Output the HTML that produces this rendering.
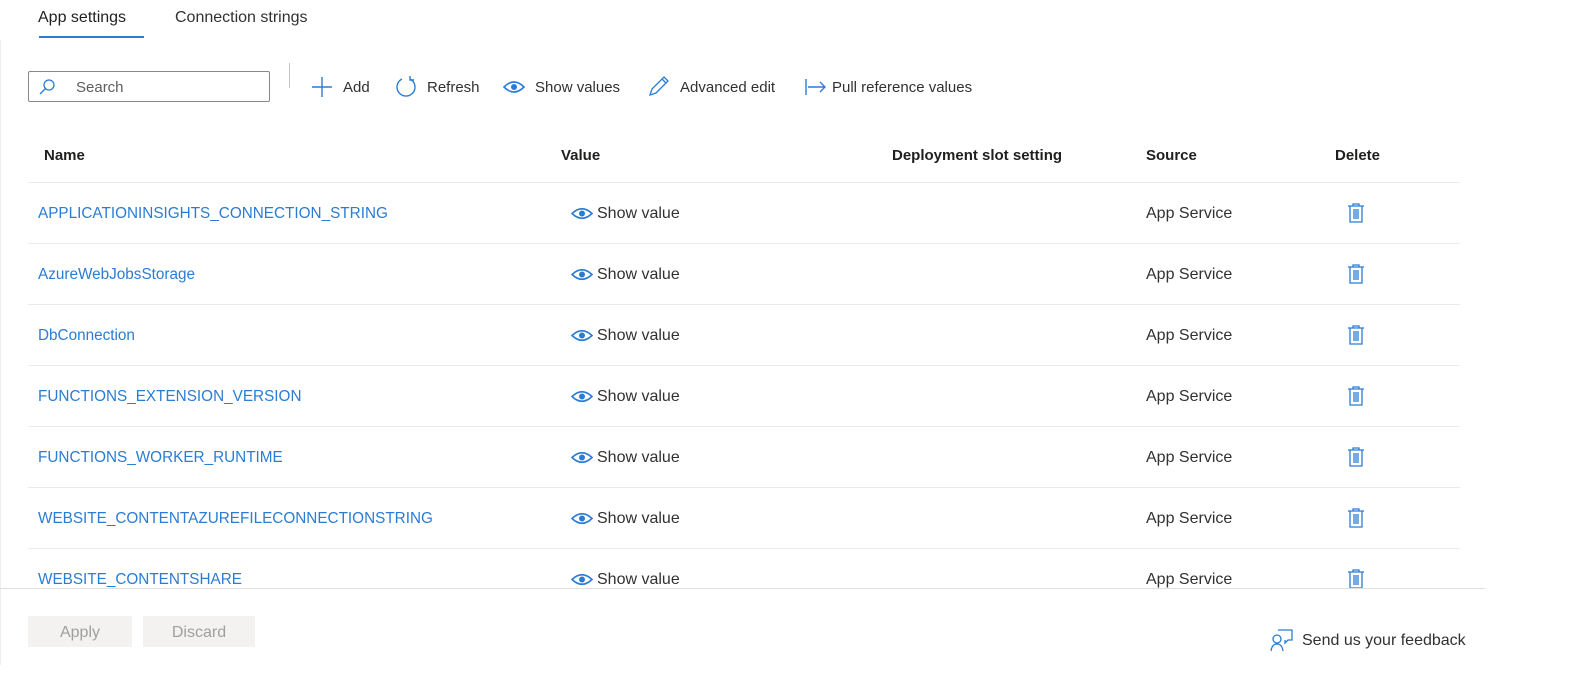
<!DOCTYPE html>
<html><head><meta charset="utf-8"><style>
body{margin:0;width:1586px;height:688px;background:#fff;font-family:"Liberation Sans",sans-serif;color:#323130;position:relative;overflow:hidden;font-size:15px}
.a{position:absolute;white-space:nowrap}
.blue{color:#2b7cd3}
.line{position:absolute;height:1px;background:#edebe9}
svg{position:absolute}
</style></head><body>
<div class="a" style="left:0;top:40px;width:1px;height:625px;background:#eee"></div>
<div class="a" style="left:38px;top:9px;font-size:16px;color:#201f1e">App settings</div>
<div class="a" style="left:175px;top:9px;font-size:16px">Connection strings</div>
<div class="a" style="left:39px;top:36px;width:105px;height:2px;background:#2b7cd3"></div>

<div class="a" style="left:28px;top:71px;width:240px;height:29px;border:1px solid #8a8886;border-radius:2px"></div>
<svg style="left:38px;top:78px" width="18" height="18" viewBox="0 0 18 18"><circle cx="11" cy="7" r="5" fill="none" stroke="#2b7cd3" stroke-width="1.3"/><path d="M7.5 10.5L2 16" stroke="#2b7cd3" stroke-width="1.3"/></svg>
<div class="a" style="left:76px;top:79px;color:#605e5c">Search</div>
<div class="a" style="left:289px;top:63px;width:1px;height:25px;background:#c8c6c4"></div>
<svg style="left:311px;top:76px" width="22" height="22"><path d="M11 1V21M1 11H21" stroke="#2b7cd3" stroke-width="1.4"/></svg>
<div class="a" style="left:343px;top:79px">Add</div>
<svg style="left:394px;top:75px" width="24" height="24"><path d="M8 4A9 9 0 1 0 16 4" fill="none" stroke="#2b7cd3" stroke-width="1.4"/><path d="M16 1V5H20" fill="none" stroke="#2b7cd3" stroke-width="1.4"/></svg>
<div class="a" style="left:427px;top:79px">Refresh</div>
<svg style="left:503px;top:80px" width="22" height="14"><path d="M1 7Q11 -3 21 7Q11 17 1 7Z" fill="none" stroke="#2b7cd3" stroke-width="1.6"/><circle cx="11" cy="7" r="3" fill="#2b7cd3"/></svg>
<div class="a" style="left:535px;top:79px">Show values</div>
<svg style="left:648px;top:75px" width="22" height="22"><path d="M2 20L4 14L16 2L20 6L8 18Z M14 4L18 8" fill="none" stroke="#2b7cd3" stroke-width="1.3"/></svg>
<div class="a" style="left:680px;top:79px">Advanced edit</div>
<svg style="left:805px;top:78px" width="22" height="18"><path d="M1 1V17M3 9H20M15 4L20 9L15 14" fill="none" stroke="#2b7cd3" stroke-width="1.4"/></svg>
<div class="a" style="left:832px;top:79px">Pull reference values</div>

<div class="a" style="left:44px;top:147px;font-weight:bold;color:#201f1e">Name</div>
<div class="a" style="left:561px;top:147px;font-weight:bold;color:#201f1e">Value</div>
<div class="a" style="left:892px;top:147px;font-weight:bold;color:#201f1e">Deployment slot setting</div>
<div class="a" style="left:1146px;top:147px;font-weight:bold;color:#201f1e">Source</div>
<div class="a" style="left:1335px;top:147px;font-weight:bold;color:#201f1e">Delete</div>
<div id="rows"></div>
<div class="line" style="left:28px;top:182px;width:1432px"></div>
<script>
var n=["APPLICATIONINSIGHTS_CONNECTION_STRING","AzureWebJobsStorage","DbConnection","FUNCTIONS_EXTENSION_VERSION","FUNCTIONS_WORKER_RUNTIME","WEBSITE_CONTENTAZUREFILECONNECTIONSTRING","WEBSITE_CONTENTSHARE"];
var h="";
n.forEach(function(s,i){var y=213+61*i;
h+='<div class="a blue" style="left:38px;top:'+(y-8)+'px;font-size:15.3px">'+s+'</div>';
h+='<svg style="left:571px;top:'+(y-6)+'px" width="22" height="13"><path d="M1 6.5Q11 -3 21 6.5Q11 16 1 6.5Z" fill="none" stroke="#2b7cd3" stroke-width="1.6"/><circle cx="11" cy="6.5" r="3" fill="#2b7cd3"/></svg>';
h+='<div class="a" style="left:597px;top:'+(y-8)+'px;font-size:16px">Show value</div>';
h+='<div class="a" style="left:1146px;top:'+(y-8)+'px;font-size:16px">App Service</div>';
h+='<svg style="left:1346px;top:'+(y-11)+'px" width="20" height="22"><path d="M2 4H18M7 4V2H13V4M4 4V20H16V4M8 7V17M10 7V17M12 7V17" fill="none" stroke="#2b7cd3" stroke-width="1.3"/></svg>';
if(i<6)h+='<div class="line" style="left:28px;top:'+(y+30)+'px;width:1432px"></div>';
});
document.getElementById('rows').innerHTML=h;
</script>
<div class="line" style="left:0;top:588px;width:1485px;background:#e1dfdd"></div>
<div class="a" style="left:28px;top:616px;width:104px;height:31px;background:#f3f2f1;color:#a19f9d;text-align:center;line-height:33px;font-size:16px">Apply</div>
<div class="a" style="left:143px;top:616px;width:112px;height:31px;background:#f3f2f1;color:#a19f9d;text-align:center;line-height:33px;font-size:16px">Discard</div>
<svg style="left:1270px;top:628px" width="24" height="24"><path d="M8 2H22V12H18L15 15V12" fill="none" stroke="#2b7cd3" stroke-width="1.3"/><circle cx="7" cy="11" r="4" fill="none" stroke="#2b7cd3" stroke-width="1.3"/><path d="M1 23Q2 16 7 16Q12 16 13 23" fill="none" stroke="#2b7cd3" stroke-width="1.3"/></svg>
<div class="a" style="left:1302px;top:632px;font-size:16px">Send us your feedback</div>
</body></html>
